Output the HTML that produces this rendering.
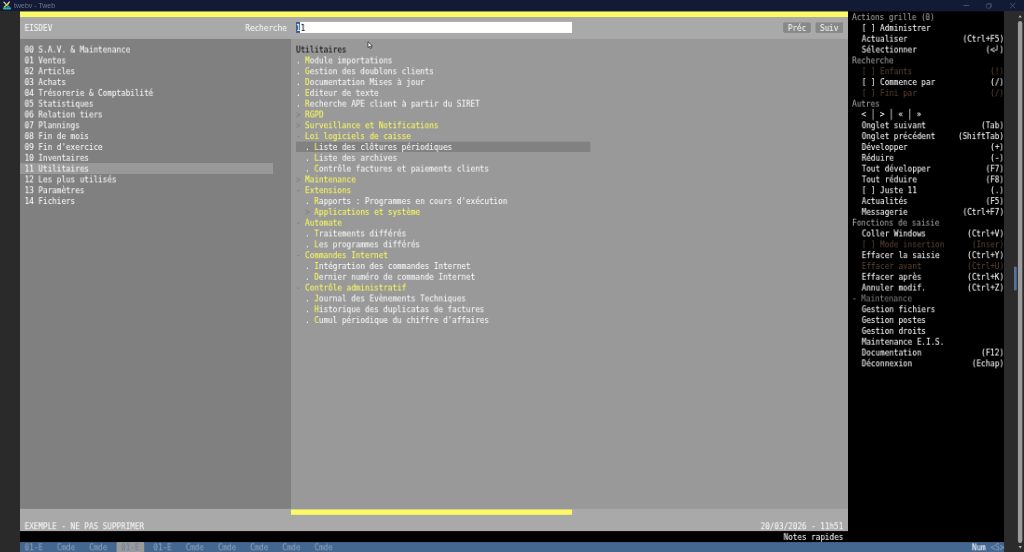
<!DOCTYPE html>
<html lang="fr"><head><meta charset="utf-8"><title>twebv - Tweb</title>
<style>
html,body{margin:0;padding:0;background:#000;}
body{width:1024px;height:552px;position:relative;overflow:hidden;font-family:"DejaVu Sans Mono","Liberation Mono",monospace;}
.b{position:absolute;}
.t{position:absolute;left:0;top:0;will-change:transform;white-space:pre;font-size:8.2px;line-height:10.82px;height:10.82px;transform-origin:0 0;-webkit-text-stroke:0.04px currentColor;}
.w{color:#fbfbfb;}
.wb{color:#fff;}
.k{color:#000;}
.y{color:#fffd5e;}
.g{color:#7f7f7f;}
.h{color:#a8a8a8;}
.h2{color:#808080;}
.bar{color:#e6e6e6;}
.d{color:#5c4434;}
.tb{color:#8fa3bd;}
.tbs{color:#6482a8;}
#ttl{will-change:transform;position:absolute;left:13.8px;top:0;height:11px;line-height:11px;font-family:"Liberation Sans",sans-serif;font-size:7px;color:#70768c;white-space:pre;}
svg{position:absolute;}
</style></head><body>
<div class="b" style="left:0px;top:0px;width:1024px;height:12px;background:#121a36"></div>
<div class="b" style="left:0px;top:11px;width:20px;height:541px;background:#2a2a2a"></div>
<div class="b" style="left:1004px;top:11px;width:20px;height:541px;background:#2b2b2b"></div>
<div class="b" style="left:848px;top:12px;width:156px;height:532px;background:#000000"></div>
<div class="b" style="left:848px;top:11px;width:156px;height:1px;background:rgba(0,0,0,0.60)"></div>
<div class="b" style="left:20px;top:12px;width:828px;height:28px;background:#a9a9a9"></div>
<div class="b" style="left:20px;top:12px;width:828px;height:5px;background:#fcf966"></div>
<div class="b" style="left:20px;top:11px;width:828px;height:1px;background:rgba(252,249,102,0.55)"></div>
<div class="b" style="left:20px;top:17px;width:828px;height:1px;background:rgba(252,249,102,0.05)"></div>
<div class="b" style="left:20px;top:39px;width:271px;height:471px;background:#808080"></div>
<div class="b" style="left:20px;top:38px;width:271px;height:1px;background:rgba(128,128,128,0.10)"></div>
<div class="b" style="left:291px;top:39px;width:557px;height:471px;background:#999999"></div>
<div class="b" style="left:291px;top:38px;width:557px;height:1px;background:rgba(153,153,153,0.10)"></div>
<div class="b" style="left:20px;top:509px;width:828px;height:23px;background:#a9a9a9"></div>
<div class="b" style="left:20px;top:508px;width:828px;height:1px;background:rgba(169,169,169,0.10)"></div>
<div class="b" style="left:291px;top:510px;width:281px;height:4px;background:#fcf966"></div>
<div class="b" style="left:291px;top:509px;width:281px;height:1px;background:rgba(252,249,102,0.50)"></div>
<div class="b" style="left:291px;top:514px;width:281px;height:1px;background:rgba(252,249,102,0.80)"></div>
<div class="b" style="left:20px;top:532px;width:828px;height:11px;background:#000000"></div>
<div class="b" style="left:20px;top:531px;width:828px;height:1px;background:rgba(0,0,0,0.90)"></div>
<div class="b" style="left:20px;top:543px;width:984px;height:9px;background:#44678f"></div>
<div class="b" style="left:20px;top:542px;width:984px;height:1px;background:rgba(68,103,143,0.90)"></div>
<div class="b" style="left:20px;top:164px;width:253px;height:9px;background:#999999"></div>
<div class="b" style="left:20px;top:163px;width:253px;height:1px;background:rgba(153,153,153,0.92)"></div>
<div class="b" style="left:20px;top:173px;width:253px;height:1px;background:rgba(153,153,153,0.98)"></div>
<div class="b" style="left:296px;top:142px;width:294px;height:9px;background:#818181"></div>
<div class="b" style="left:296px;top:141px;width:294px;height:1px;background:rgba(129,129,129,0.36)"></div>
<div class="b" style="left:296px;top:151px;width:294px;height:1px;background:rgba(129,129,129,0.99)"></div>
<div class="b" style="left:590px;top:142px;width:1px;height:9px;background:rgba(129,129,129,0.40)"></div>
<div class="b" style="left:296px;top:22px;width:276px;height:10px;background:#ffffff"></div>
<div class="b" style="left:296px;top:21px;width:276px;height:1px;background:rgba(255,255,255,0.10)"></div>
<div class="b" style="left:296px;top:32px;width:276px;height:1px;background:rgba(255,255,255,0.95)"></div>
<div class="b" style="left:296px;top:22px;width:4px;height:10px;background:#3b6092"></div>
<div class="b" style="left:296px;top:21px;width:4px;height:1px;background:rgba(59,96,146,0.10)"></div>
<div class="b" style="left:296px;top:32px;width:4px;height:1px;background:rgba(59,96,146,0.95)"></div>
<div class="b" style="left:784px;top:23px;width:26px;height:9px;background:#888888"></div>
<div class="b" style="left:784px;top:22px;width:26px;height:1px;background:rgba(136,136,136,0.60)"></div>
<div class="b" style="left:784px;top:32px;width:26px;height:1px;background:rgba(136,136,136,0.90)"></div>
<div class="b" style="left:783px;top:23px;width:1px;height:9px;background:rgba(136,136,136,0.90)"></div>
<div class="b" style="left:810px;top:23px;width:1px;height:9px;background:rgba(136,136,136,0.90)"></div>
<div class="b" style="left:816px;top:23px;width:27px;height:9px;background:#888888"></div>
<div class="b" style="left:816px;top:22px;width:27px;height:1px;background:rgba(136,136,136,0.60)"></div>
<div class="b" style="left:816px;top:32px;width:27px;height:1px;background:rgba(136,136,136,0.90)"></div>
<div class="b" style="left:815px;top:23px;width:1px;height:9px;background:rgba(136,136,136,0.50)"></div>
<div class="b" style="left:843px;top:23px;width:1px;height:9px;background:rgba(136,136,136,0.10)"></div>
<div class="b" style="left:117px;top:543px;width:27px;height:9px;background:#9a9a9a"></div>
<div class="b" style="left:117px;top:542px;width:27px;height:1px;background:rgba(154,154,154,0.90)"></div>
<div class="b" style="left:117px;top:552px;width:27px;height:1px;background:rgba(154,154,154,0.10)"></div>
<div class="b" style="left:116px;top:543px;width:1px;height:9px;background:rgba(154,154,154,0.40)"></div>
<div class="b" style="left:144px;top:543px;width:1px;height:9px;background:rgba(154,154,154,0.20)"></div>
<div class="t w" style="transform:translate(24.60px,22.90px) scaleX(0.9318)">EISDEV</div>
<div class="t w" style="transform:translate(245.40px,22.90px) scaleX(0.9318)">Recherche</div>
<div class="t k" style="transform:translate(296.00px,22.90px) scaleX(0.9318)"><span class="w">1</span>1</div>
<div class="t w" style="transform:translate(787.80px,22.90px) scaleX(0.9318)">Préc</div>
<div class="t w" style="transform:translate(820.00px,22.90px) scaleX(0.9318)">Suiv</div>
<div class="t w" style="transform:translate(24.60px,44.56px) scaleX(0.9318)">00 S.A.V. &amp; Maintenance</div>
<div class="t w" style="transform:translate(24.60px,55.38px) scaleX(0.9318)">01 Ventes</div>
<div class="t w" style="transform:translate(24.60px,66.20px) scaleX(0.9318)">02 Articles</div>
<div class="t w" style="transform:translate(24.60px,77.02px) scaleX(0.9318)">03 Achats</div>
<div class="t w" style="transform:translate(24.60px,87.84px) scaleX(0.9318)">04 Trésorerie &amp; Comptabilité</div>
<div class="t w" style="transform:translate(24.60px,98.66px) scaleX(0.9318)">05 Statistiques</div>
<div class="t w" style="transform:translate(24.60px,109.48px) scaleX(0.9318)">06 Relation tiers</div>
<div class="t w" style="transform:translate(24.60px,120.30px) scaleX(0.9318)">07 Plannings</div>
<div class="t w" style="transform:translate(24.60px,131.12px) scaleX(0.9318)">08 Fin de mois</div>
<div class="t w" style="transform:translate(24.60px,141.94px) scaleX(0.9318)">09 Fin d'exercice</div>
<div class="t w" style="transform:translate(24.60px,152.76px) scaleX(0.9318)">10 Inventaires</div>
<div class="t w" style="transform:translate(24.60px,163.58px) scaleX(0.9318)">11 Utilitaires</div>
<div class="t w" style="transform:translate(24.60px,174.40px) scaleX(0.9318)">12 Les plus utilisés</div>
<div class="t w" style="transform:translate(24.60px,185.22px) scaleX(0.9318)">13 Paramètres</div>
<div class="t w" style="transform:translate(24.60px,196.04px) scaleX(0.9318)">14 Fichiers</div>
<div class="t k" style="transform:translate(296.00px,44.56px) scaleX(0.9318)">Utilitaires</div>
<div class="t w" style="transform:translate(296.00px,55.38px) scaleX(0.9318)">. <span class="y">M</span>odule importations</div>
<div class="t w" style="transform:translate(296.00px,66.20px) scaleX(0.9318)">. <span class="y">G</span>estion des doublons clients</div>
<div class="t w" style="transform:translate(296.00px,77.02px) scaleX(0.9318)">. <span class="y">D</span>ocumentation Mises à jour</div>
<div class="t w" style="transform:translate(296.00px,87.84px) scaleX(0.9318)">. <span class="y">E</span>diteur de texte</div>
<div class="t w" style="transform:translate(296.00px,98.66px) scaleX(0.9318)">. <span class="y">R</span>echerche APE client à partir du SIRET</div>
<div class="t y" style="transform:translate(296.00px,109.48px) scaleX(0.9318)"><span class="g">&gt;</span> RGPD</div>
<div class="t y" style="transform:translate(296.00px,120.30px) scaleX(0.9318)"><span class="g">&gt;</span> Surveillance et Notifications</div>
<div class="t y" style="transform:translate(296.00px,131.12px) scaleX(0.9318)"><span class="g">-</span> Loi logiciels de caisse</div>
<div class="t w" style="transform:translate(305.20px,141.94px) scaleX(0.9318)">. <span class="y">L</span>iste des clôtures périodiques</div>
<div class="t w" style="transform:translate(305.20px,152.76px) scaleX(0.9318)">. <span class="y">L</span>iste des archives</div>
<div class="t w" style="transform:translate(305.20px,163.58px) scaleX(0.9318)">. <span class="y">C</span>ontrôle factures et paiements clients</div>
<div class="t y" style="transform:translate(296.00px,174.40px) scaleX(0.9318)"><span class="g">&gt;</span> Maintenance</div>
<div class="t y" style="transform:translate(296.00px,185.22px) scaleX(0.9318)"><span class="g">-</span> Extensions</div>
<div class="t w" style="transform:translate(305.20px,196.04px) scaleX(0.9318)">. <span class="y">R</span>apports : Programmes en cours d'exécution</div>
<div class="t y" style="transform:translate(305.20px,206.86px) scaleX(0.9318)"><span class="g">&gt;</span> Applications et système</div>
<div class="t y" style="transform:translate(296.00px,217.68px) scaleX(0.9318)"><span class="g">-</span> Automate</div>
<div class="t w" style="transform:translate(305.20px,228.50px) scaleX(0.9318)">. <span class="y">T</span>raitements différés</div>
<div class="t w" style="transform:translate(305.20px,239.32px) scaleX(0.9318)">. <span class="y">L</span>es programmes différés</div>
<div class="t y" style="transform:translate(296.00px,250.14px) scaleX(0.9318)"><span class="g">-</span> Commandes Internet</div>
<div class="t w" style="transform:translate(305.20px,260.96px) scaleX(0.9318)">. <span class="y">I</span>ntégration des commandes Internet</div>
<div class="t w" style="transform:translate(305.20px,271.78px) scaleX(0.9318)">. <span class="y">D</span>ernier numéro de commande Internet</div>
<div class="t y" style="transform:translate(296.00px,282.60px) scaleX(0.9318)"><span class="g">-</span> Contrôle administratif</div>
<div class="t w" style="transform:translate(305.20px,293.42px) scaleX(0.9318)">. <span class="y">J</span>ournal des Evènements Techniques</div>
<div class="t w" style="transform:translate(305.20px,304.24px) scaleX(0.9318)">. <span class="y">H</span>istorique des duplicatas de factures</div>
<div class="t w" style="transform:translate(305.20px,315.06px) scaleX(0.9318)">. <span class="y">C</span>umul périodique du chiffre d'affaires</div>
<div class="t h" style="transform:translate(852.10px,12.10px) scaleX(0.9318)">Actions grille (0)</div>
<div class="t wb" style="transform:translate(861.70px,22.92px) scaleX(0.9318)">[ ] Administrer</div>
<div class="t wb" style="transform:translate(861.70px,33.74px) scaleX(0.9318)">Actualiser</div>
<div class="t wb" style="transform:translate(962.60px,33.74px) scaleX(0.9318)">(Ctrl+F5)</div>
<div class="t wb" style="transform:translate(861.70px,44.56px) scaleX(0.9318)">Sélectionner</div>
<div class="t wb" style="transform:translate(985.60px,44.56px) scaleX(0.9318)">(&lt;┘)</div>
<div class="t h" style="transform:translate(852.10px,55.38px) scaleX(0.9318)">Recherche</div>
<div class="t d" style="transform:translate(861.70px,66.20px) scaleX(0.9318)">[ ] Enfants</div>
<div class="t d" style="transform:translate(990.20px,66.20px) scaleX(0.9318)">(!)</div>
<div class="t wb" style="transform:translate(861.70px,77.02px) scaleX(0.9318)">[ ] Commence par</div>
<div class="t wb" style="transform:translate(990.20px,77.02px) scaleX(0.9318)">(/)</div>
<div class="t d" style="transform:translate(861.70px,87.84px) scaleX(0.9318)">[ ] Fini par</div>
<div class="t d" style="transform:translate(990.20px,87.84px) scaleX(0.9318)">(/)</div>
<div class="t h" style="transform:translate(852.10px,98.66px) scaleX(0.9318)">Autres</div>
<div class="t wb" style="transform:translate(861.50px,108.88px) scaleX(0.9318)">&lt;   &gt;   «   »</div>
<div class="t bar" style="transform:translate(870.75px,108.85px) scale(0.9318,1.135)">│   │   │</div>
<div class="t wb" style="transform:translate(861.70px,120.30px) scaleX(0.9318)">Onglet suivant</div>
<div class="t wb" style="transform:translate(981.00px,120.30px) scaleX(0.9318)">(Tab)</div>
<div class="t wb" style="transform:translate(861.70px,131.12px) scaleX(0.9318)">Onglet précédent</div>
<div class="t wb" style="transform:translate(958.00px,131.12px) scaleX(0.9318)">(ShiftTab)</div>
<div class="t wb" style="transform:translate(861.70px,141.94px) scaleX(0.9318)">Développer</div>
<div class="t wb" style="transform:translate(990.20px,141.94px) scaleX(0.9318)">(+)</div>
<div class="t wb" style="transform:translate(861.70px,152.76px) scaleX(0.9318)">Réduire</div>
<div class="t wb" style="transform:translate(990.20px,152.76px) scaleX(0.9318)">(-)</div>
<div class="t wb" style="transform:translate(861.70px,163.58px) scaleX(0.9318)">Tout développer</div>
<div class="t wb" style="transform:translate(985.60px,163.58px) scaleX(0.9318)">(F7)</div>
<div class="t wb" style="transform:translate(861.70px,174.40px) scaleX(0.9318)">Tout réduire</div>
<div class="t wb" style="transform:translate(985.60px,174.40px) scaleX(0.9318)">(F8)</div>
<div class="t wb" style="transform:translate(861.70px,185.22px) scaleX(0.9318)">[ ] Juste 11</div>
<div class="t wb" style="transform:translate(990.20px,185.22px) scaleX(0.9318)">(.)</div>
<div class="t wb" style="transform:translate(861.70px,196.04px) scaleX(0.9318)">Actualités</div>
<div class="t wb" style="transform:translate(985.60px,196.04px) scaleX(0.9318)">(F5)</div>
<div class="t wb" style="transform:translate(861.70px,206.86px) scaleX(0.9318)">Messagerie</div>
<div class="t wb" style="transform:translate(962.60px,206.86px) scaleX(0.9318)">(Ctrl+F7)</div>
<div class="t h" style="transform:translate(852.10px,217.68px) scaleX(0.9318)">Fonctions de saisie</div>
<div class="t wb" style="transform:translate(861.70px,228.50px) scaleX(0.9318)">Coller Windows</div>
<div class="t wb" style="transform:translate(967.20px,228.50px) scaleX(0.9318)">(Ctrl+V)</div>
<div class="t d" style="transform:translate(861.70px,239.32px) scaleX(0.9318)">[ ] Mode insertion</div>
<div class="t d" style="transform:translate(971.80px,239.32px) scaleX(0.9318)">(Inser)</div>
<div class="t wb" style="transform:translate(861.70px,250.14px) scaleX(0.9318)">Effacer la saisie</div>
<div class="t wb" style="transform:translate(967.20px,250.14px) scaleX(0.9318)">(Ctrl+Y)</div>
<div class="t d" style="transform:translate(861.70px,260.96px) scaleX(0.9318)">Effacer avant</div>
<div class="t d" style="transform:translate(967.20px,260.96px) scaleX(0.9318)">(Ctrl+U)</div>
<div class="t wb" style="transform:translate(861.70px,271.78px) scaleX(0.9318)">Effacer après</div>
<div class="t wb" style="transform:translate(967.20px,271.78px) scaleX(0.9318)">(Ctrl+K)</div>
<div class="t wb" style="transform:translate(861.70px,282.60px) scaleX(0.9318)">Annuler modif.</div>
<div class="t wb" style="transform:translate(967.20px,282.60px) scaleX(0.9318)">(Ctrl+Z)</div>
<div class="t h2" style="transform:translate(852.10px,293.42px) scaleX(0.9318)">- Maintenance</div>
<div class="t wb" style="transform:translate(861.70px,304.24px) scaleX(0.9318)">Gestion fichiers</div>
<div class="t wb" style="transform:translate(861.70px,315.06px) scaleX(0.9318)">Gestion postes</div>
<div class="t wb" style="transform:translate(861.70px,325.88px) scaleX(0.9318)">Gestion droits</div>
<div class="t wb" style="transform:translate(861.70px,336.70px) scaleX(0.9318)">Maintenance E.I.S.</div>
<div class="t wb" style="transform:translate(861.70px,347.52px) scaleX(0.9318)">Documentation</div>
<div class="t wb" style="transform:translate(981.00px,347.52px) scaleX(0.9318)">(F12)</div>
<div class="t wb" style="transform:translate(861.70px,358.34px) scaleX(0.9318)">Déconnexion</div>
<div class="t wb" style="transform:translate(971.80px,358.34px) scaleX(0.9318)">(Echap)</div>
<div class="t w" style="transform:translate(24.60px,521.20px) scaleX(0.9318)">EXEMPLE - NE PAS SUPPRIMER</div>
<div class="t w" style="transform:translate(760.60px,521.20px) scaleX(0.9318)">20/03/2026 - 11h51</div>
<div class="t w" style="transform:translate(783.60px,531.90px) scaleX(0.9318)">Notes rapides</div>
<div class="t tb" style="transform:translate(24.60px,542.30px) scaleX(0.9318)">01-E</div>
<div class="t tb" style="transform:translate(56.80px,542.30px) scaleX(0.9318)">Cmde</div>
<div class="t tb" style="transform:translate(89.00px,542.30px) scaleX(0.9318)">Cmde</div>
<div class="t tbs" style="transform:translate(121.20px,542.30px) scaleX(0.9318)">01-E</div>
<div class="t tb" style="transform:translate(153.40px,542.30px) scaleX(0.9318)">01-E</div>
<div class="t tb" style="transform:translate(185.60px,542.30px) scaleX(0.9318)">Cmde</div>
<div class="t tb" style="transform:translate(217.80px,542.30px) scaleX(0.9318)">Cmde</div>
<div class="t tb" style="transform:translate(250.00px,542.30px) scaleX(0.9318)">Cmde</div>
<div class="t tb" style="transform:translate(282.20px,542.30px) scaleX(0.9318)">Cmde</div>
<div class="t tb" style="transform:translate(314.40px,542.30px) scaleX(0.9318)">Cmde</div>
<div class="t w" style="transform:translate(971.90px,542.30px) scaleX(0.9318)">Num</div>
<div class="t tb" style="transform:translate(990.60px,542.30px) scaleX(0.9318)">&lt;S&gt;</div>
<div id="ttl">twebv - Tweb</div>
<svg style="left:2px;top:1px" width="10" height="9.5" viewBox="0 0 10 9.5">
<path d="M1.9 1.1 L5 4.2" stroke="#cfd2db" stroke-width="1.3" stroke-linecap="round"/>
<path d="M7.4 0.9 L6.2 2.2" stroke="#cfd2db" stroke-width="1.3" stroke-linecap="round"/>
<path d="M6.4 2.6 L2.6 5.8" stroke="#f1c232" stroke-width="1.5" stroke-linecap="round"/>
<path d="M5.6 3.9 L8.2 6 L5 6 Z" fill="#3d8ee6"/>
<rect x="0.8" y="6.3" width="8.2" height="2.3" rx="1.1" fill="#1db6a4"/>
</svg>
<svg style="left:960px;top:0" width="64" height="11" viewBox="0 0 64 11">
<g stroke="#5d647c" stroke-width="0.7" fill="none">
<path d="M3.4 5.5 H9.2"/>
<rect x="26.4" y="4.2" width="4.1" height="4" rx="0.8" stroke="#50576f"/>
<path d="M27.5 4.2 V3.4 H31.5 V7.2 H30.5" stroke="#454c64"/>
<path d="M50.1 3 L55.3 8.2 M55.3 3 L50.1 8.2"/>
</g></svg>
<svg style="left:1004px;top:11px" width="20" height="541" viewBox="0 0 20 541">
<path d="M14.4 6.6 L16.1 4.3 L17.8 6.6 Z" fill="#b5b5b5"/>
<path d="M14.5 535.1 L16.2 537.5 L17.9 535.1 Z" fill="#b5b5b5"/>
<rect x="13.9" y="10" width="4.4" height="522" rx="2.2" fill="#9c9c9c"/>
<rect x="10" y="255.5" width="2.7" height="24" rx="1.2" fill="#5473a0"/>
</svg>
<svg style="left:366.6px;top:41.4px" width="8" height="9" viewBox="0 0 8 9">
<path d="M1 0.8 V6.6 L2.5 5.4 L3.5 7.5 L4.5 7 L3.5 5 L5.4 4.9 Z" fill="#fff" stroke="#2a2a2a" stroke-width="0.75" stroke-linejoin="round"/>
</svg>
</body></html>
